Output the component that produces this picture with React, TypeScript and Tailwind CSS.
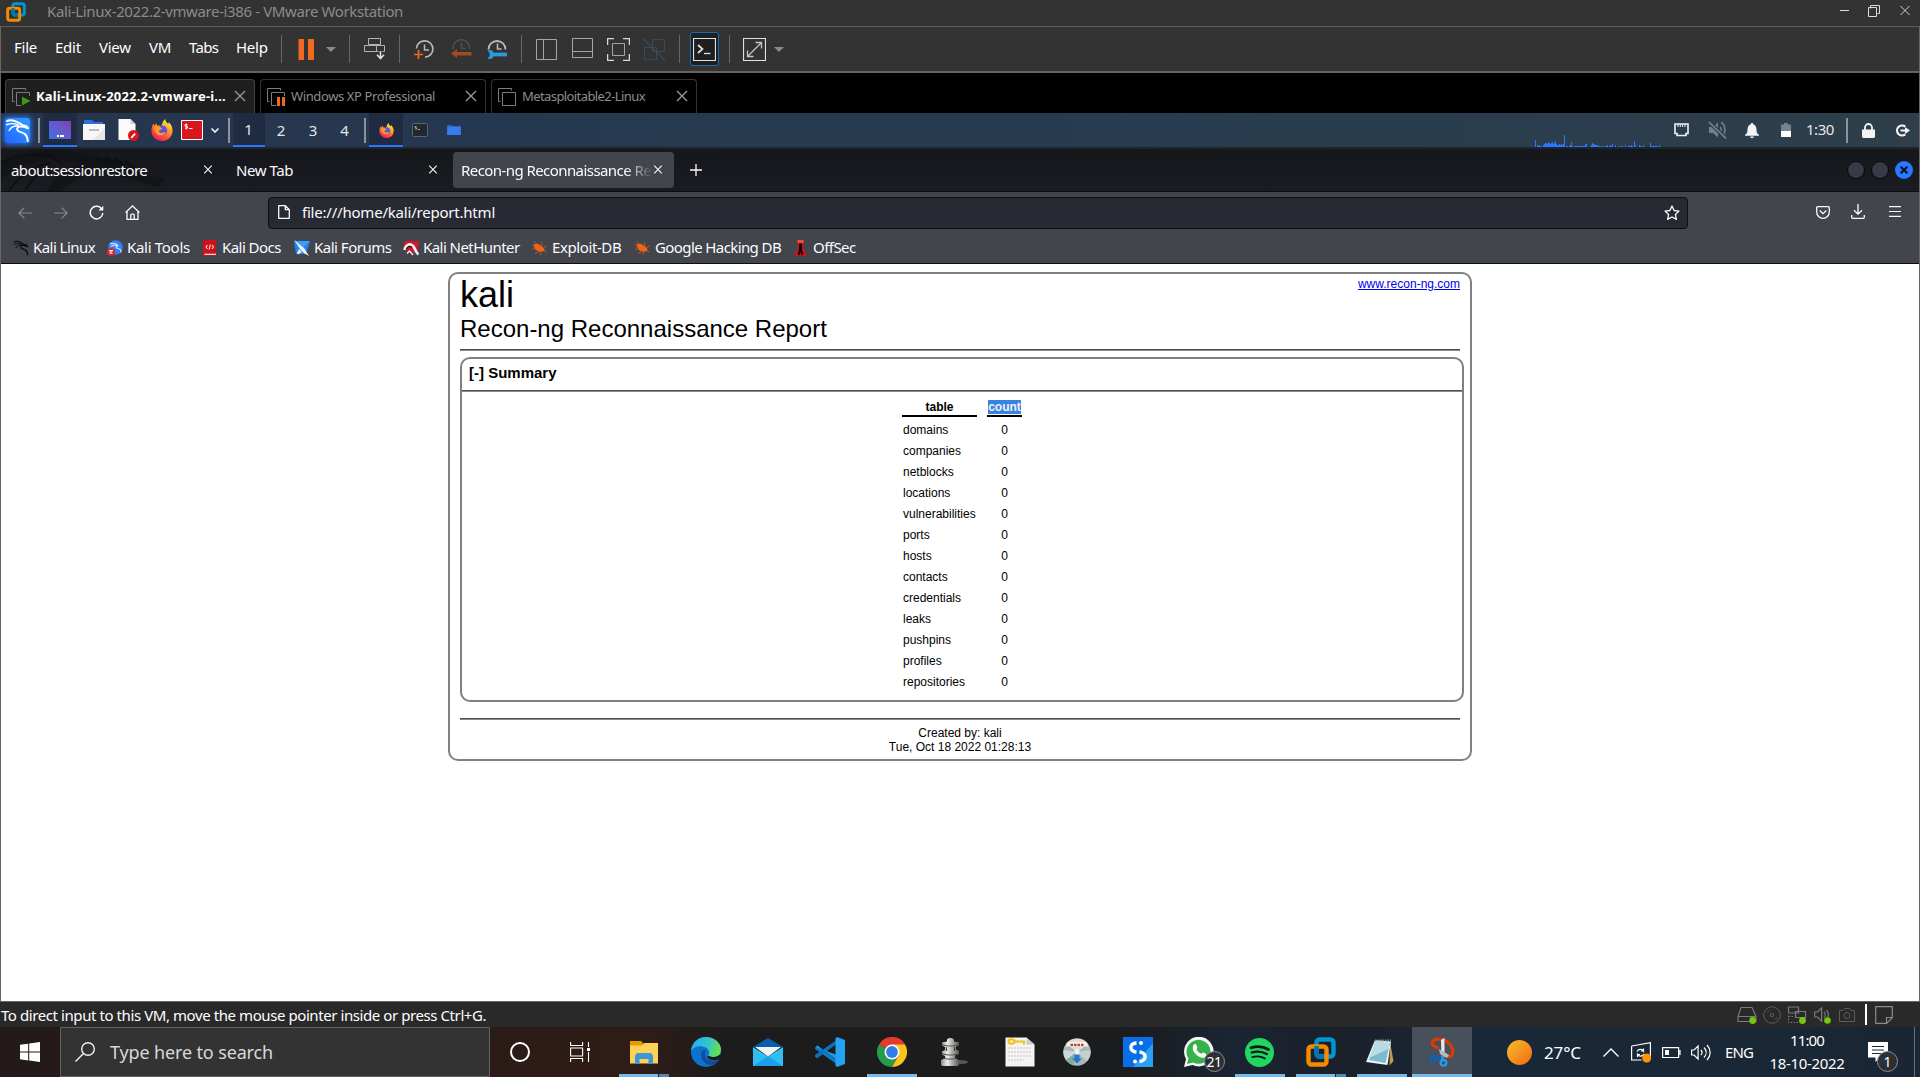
import type { ReactNode } from "react";

type IconProps = { className?: string };

/* ---------- shared drawings ---------- */

function VmwareLogo({ className = "" }: IconProps) {
  return (
    <svg className={className} viewBox="0 0 30 30" fill="none">
      <rect x="10.5" y="2.5" width="17" height="17" rx="3" stroke="#0095d3" strokeWidth="4.4" />
      <rect x="2.5" y="9.5" width="18" height="18" rx="3" stroke="#f38b00" strokeWidth="4.4" />
      <path d="M10.500 9v7.500a3 3 0 0 0 3 3H18" stroke="#0078b0" strokeWidth="4.4" />
    </svg>
  );
}

function Firefox({ className = "" }: IconProps) {
  return (
    <svg className={className} viewBox="0 0 24 24">
      <defs>
        <linearGradient id="ffx" x1="0.8" y1="0.05" x2="0.25" y2="1">
          <stop offset="0" stopColor="#fff04a" />
          <stop offset="0.35" stopColor="#ffa127" />
          <stop offset="0.7" stopColor="#ff4a3d" />
          <stop offset="1" stopColor="#e11a6c" />
        </linearGradient>
      </defs>
      <path d="M12 24C5.300 24 0.500 19 0.500 12.500 0.500 9.500 1.500 6.500 3 5l.7 2.300L5.500 4.500l1.500 2.800C9 6.800 10.500 7 11.500 8c.5-3.500 1.500-6 4-8 .3 2.800 1.500 3.800 3.300 5.300l.7-1.800c2.800 2.500 4.200 6 4 9.500C23.200 19.500 18.500 24 12 24z" fill="url(#ffx)" />
      <circle cx="12.500" cy="12.500" r="5.200" fill="#5a55d8" />
      <path d="M3.500 9c3-1.500 6.500-.8 8.500 1 .8.8-1.500 1.500-2.800 2.200-1.500 1 .3 3.300 2.800 3 1.700-.3 2.800-1.200 4-.5-1 3-7 4.500-10 1.500C4 14 3.300 11.500 3.500 9z" fill="#ff9a28" />
    </svg>
  );
}

function Dragon({ className = "", color = "#fff", width = 1.6 }: IconProps & { color?: string; width?: number }) {
  return (
    <svg className={className} viewBox="0 0 24 24" fill="none" stroke={color} strokeWidth={width} strokeLinecap="round" strokeLinejoin="round">
      <path d="M2 3c3.500-2 7-.5 9.500.8 2 .8 4 2 5.500 3.200l3.500.8 1.500 2-2.500-.8-2.700-.8c-3.500-.6-5.500.8-5 3 .6 2.300 4 2 7 4 2.200 1.600 2.800 4 3 7" />
      <path d="M1.500 6.500c4-1.500 7.500-1.500 11 0M4 12c1.500-3 4.500-4.500 9-4.500" strokeWidth={width * 0.7} />
    </svg>
  );
}

function Folder({ className = "" }: IconProps) {
  return (
    <svg className={className} viewBox="0 0 15 11">
      <path d="M0 0h5l1 1.200h9V11H0z" fill="#2b62c9" />
      <path d="M0 2h15v9H0z" fill="#367bf0" />
    </svg>
  );
}

function Close({ className = "", color = "#fbfbfe", width = 1.2 }: IconProps & { color?: string; width?: number }) {
  return (
    <svg className={className} viewBox="0 0 10 10" stroke={color} strokeWidth={width}>
      <path d="M.8.8l8.400 8.400M9.200.8L.8 9.200" />
    </svg>
  );
}

function Caret({ className = "" }: IconProps) {
  return (
    <svg className={`h-[5px] w-[10px] shrink-0 ${className}`} viewBox="0 0 10 5">
      <path d="M0 0h10L5 5z" fill="#8a8a8a" />
    </svg>
  );
}

/* ---------- VMware window ---------- */

function TitleBar() {
  return (
    <div className="flex h-[27px] items-center border-b border-[#5e5e5e] bg-[#333333] pl-[6px]">
      <VmwareLogo className="mt-[-3px] h-5 w-5" />
      <span className="ml-[21px] mt-[-4px] w-[400px] text-[15px] tracking-[-0.38px] text-[#8b8b8b]">
        Kali-Linux-2022.2-vmware-i386 - VMware Workstation
      </span>
      <svg className="ml-auto mr-[10px] mt-[-4px] h-3 w-[70px]" viewBox="0 0 70 12" fill="none" stroke="#dcdcdc">
        <path d="M0 5.500h9M30.500 3.500v-3h9v8h-2M28.500 2.500h8v9h-8z" strokeWidth="1" />
        <path d="M60.500 1l9 9M69.500 1l-9 9" strokeWidth="0.9" />
      </svg>
    </div>
  );
}

function Rule({ className = "" }: IconProps) {
  return <div className={`h-7 w-px shrink-0 bg-[#666666] ${className}`} />;
}

function Clock({ stroke }: { stroke: string }) {
  return (
    <>
      <path d="M2.500 9.500A8.200 8.200 0 1 1 11 18.200" stroke={stroke} strokeWidth="1.700" />
      <path d="M10.500 5.500v5.500h4.500" stroke={stroke} strokeWidth="1.500" />
    </>
  );
}

function MenuBar() {
  return (
    <div className="flex h-[46px] items-center border-b-2 border-[#636363] bg-[#333333] pl-[13px] text-[15px] tracking-[-0.25px] text-white">
      <span className="mt-[-4px] w-[41px]">File</span>
      <span className="mt-[-4px] w-[44px]">Edit</span>
      <span className="mt-[-4px] w-[50px]">View</span>
      <span className="mt-[-4px] w-10">VM</span>
      <span className="mt-[-4px] w-[47px] tracking-[-0.7px]">Tabs</span>
      <span className="mt-[-4px] w-[45px]">Help</span>
      <Rule />
      <svg className="ml-4 h-[21px] w-4 shrink-0" viewBox="0 0 16 21" fill="#f26722">
        <path d="M.5 0h5.500v21H.5zM10 0h6v21h-6z" />
      </svg>
      <Caret className="ml-3" />
      <Rule className="ml-[13px]" />
      <svg className="ml-[14px] h-[22px] w-[22px] shrink-0" viewBox="0 0 22 22" fill="none" stroke="#b4b4b4">
        <path d="M4.500.500h12v6h-12zM.5 7.500h12v6H.5zM12.500 7.500h8v6h-8z" />
        <path d="M16.500 12v8M12.500 16.500l4 4 4-4" stroke="#333" strokeWidth="4" />
        <path d="M16.500 13v7M13 16.800l3.500 3.700 3.500-3.700" stroke="#dddddd" strokeWidth="1.600" />
      </svg>
      <Rule className="ml-[13px]" />
      <svg className="ml-[14px] h-5 w-5 shrink-0" viewBox="0 0 20 20" fill="none">
        <Clock stroke="#b9b9b9" />
        <path d="M0 15.500h9M4.500 11v9" stroke="#f26722" strokeWidth="1.700" />
      </svg>
      <svg className="ml-[17px] mt-[-2px] h-5 w-[21px] shrink-0" viewBox="0 0 21 20" fill="none">
        <path d="M2 11a8.300 8.300 0 1 1 16.500 0" stroke="#505050" strokeWidth="1.500" />
        <path d="M10.500 4.500v6h4" stroke="#505050" strokeWidth="1.500" />
        <path d="M0 15.500l6-4.500v3h14.500v3.500H6V20z" fill="#9f4c25" />
      </svg>
      <svg className="ml-[15px] h-5 w-5 shrink-0" viewBox="0 0 20 20" fill="none">
        <path d="M1.500 10.500a8.500 8.500 0 1 1 17 0" stroke="#b9b9b9" strokeWidth="1.800" />
        <path d="M10.500 4.500v5.500h4" stroke="#b9b9b9" strokeWidth="1.600" />
        <path d="M1 11.500h3.500l2 2.500h13.500v3H6.500l-2 2.500H1l2-2.500v-3z" fill="#2f97dd" stroke="#2f97dd" strokeWidth="0.800" />
      </svg>
      <Rule className="ml-[14px]" />
      <svg className="ml-[14px] h-[21px] w-[21px] shrink-0" viewBox="0 0 21 21" fill="none" stroke="#a5a5a5">
        <path d="M.5.500h20v20H.5zM7.500.500v20" />
      </svg>
      <svg className="ml-[15px] mt-[-2px] h-5 w-[21px] shrink-0" viewBox="0 0 21 20" fill="none" stroke="#a5a5a5">
        <path d="M.5.500h20v19H.5zM.5 13.500h20" />
      </svg>
      <svg className="ml-[14px] h-[23px] w-[23px] shrink-0" viewBox="0 0 23 23" fill="none" stroke="#d8d8d8">
        <path d="M.6 7V.6H7M16 .6h6.400V7M22.400 16v6.400H16M7 22.400H.6V16" strokeWidth="1.300" />
        <path d="M5.500 5.500h12v12h-12z" stroke="#a5a5a5" />
      </svg>
      <svg className="ml-[13px] h-[23px] w-[23px] shrink-0" viewBox="0 0 23 23" fill="none" stroke="#3a4a57">
        <path d="M9.500 1.500h12v12h-12zM1.500 9.500h12v12h-12z" />
        <path d="M0 .5l22 22" strokeWidth="1.400" />
      </svg>
      <Rule className="ml-[13px]" />
      <div className="ml-[10px] flex h-[34px] w-[29px] shrink-0 items-center justify-center rounded-[3px] border border-[#1c6cb0] bg-[#1f1f1f]">
        <svg className="h-[23px] w-[23px]" viewBox="0 0 23 23" fill="none" stroke="#e0e0e0">
          <path d="M.5.500h22v22H.5z" strokeWidth="1.200" />
          <path d="M5 7l4.500 4L5 15" strokeWidth="1.700" />
          <path d="M11 15.500h6.500" strokeWidth="1.300" />
        </svg>
      </div>
      <Rule className="ml-[10px]" />
      <svg className="ml-[13px] h-[23px] w-[23px] shrink-0" viewBox="0 0 23 23" fill="none" stroke="#e0e0e0">
        <path d="M.5.500h22v22H.5z" strokeWidth="1.200" />
        <path d="M5 18L18 5M12.500 4.500h6v6M4.500 12.500v6h6" stroke="#c4c4c4" strokeWidth="1.300" />
      </svg>
      <Caret className="ml-2" />
    </div>
  );
}

function VmIcon({ badge }: { badge?: "play" | "pause" }) {
  return (
    <svg className="h-[18px] w-[18px] shrink-0" viewBox="0 0 18 18" fill="none" stroke="#7c7c7c">
      <path d="M2.500 13.500H.5V.500h13v2M4.500 4.500h13v13h-13z" />
      {badge === "play" && (
        <>
          <path d="M9 8h9v10H9z" fill="#1f1f1f" stroke="none" />
          <path d="M10 8.500l8.500 4.500L10 17.500z" fill="#3f9b0b" stroke="none" />
        </>
      )}
      {badge === "pause" && (
        <>
          <path d="M9 8h9v10H9z" fill="#000" stroke="none" />
          <path d="M10 9h3v9h-3zM15 9h3v9h-3z" fill="#f26722" stroke="none" />
        </>
      )}
    </svg>
  );
}

function VmTabs() {
  return (
    <div className="flex h-10 gap-[5px] bg-black pl-1 pt-[6px] text-[13px] text-[#8d8d8d]">
      <div className="flex w-[250px] items-center rounded-t-[4px] border border-b-0 border-[#444444] bg-[#1f1f1f] pl-[6px] pr-[8px]">
        <VmIcon badge="play" />
        <span className="ml-[6px] whitespace-nowrap font-bold tracking-[0.19px] text-white">Kali-Linux-2022.2-vmware-i...</span>
        <Close className="mb-[2px] ml-auto h-3 w-3" color="#9a9a9a" width={1.1} />
      </div>
      <div className="flex w-[226px] items-center rounded-t-[4px] border border-b-0 border-[#343434] bg-black pl-[6px] pr-[8px]">
        <VmIcon badge="pause" />
        <span className="ml-[6px] whitespace-nowrap tracking-[-0.38px]">Windows XP Professional</span>
        <Close className="mb-[2px] ml-auto h-3 w-3" color="#9a9a9a" width={1.1} />
      </div>
      <div className="flex w-[206px] items-center rounded-t-[4px] border border-b-0 border-[#343434] bg-black pl-[6px] pr-[8px]">
        <VmIcon />
        <span className="ml-[6px] whitespace-nowrap tracking-[-0.59px]">Metasploitable2-Linux</span>
        <Close className="mb-[2px] ml-auto h-3 w-3" color="#9a9a9a" width={1.1} />
      </div>
    </div>
  );
}

/* ---------- Kali panel ---------- */

function Tile({ children, className = "w-[34px]", active = false }: { children?: ReactNode; className?: string; active?: boolean }) {
  return (
    <div
      className={`flex h-[34px] shrink-0 items-center justify-center ${className} ${
        active ? "border-b-2 border-[#2777ff] bg-[#1f2b40] pt-[2px]" : ""
      }`}
    >
      {children}
    </div>
  );
}

function PanelSep({ className = "" }: IconProps) {
  return <div className={`h-[25px] w-[2px] shrink-0 bg-[#8c939d] ${className}`} />;
}

const LOAD = [
  7, 0, 2, 1, 2, 1, 1, 0, 2, 3, 4, 4, 3, 5, 4, 3, 4, 5, 3, 4, 6, 3, 2, 2, 3, 2, 3, 2, 3, 12, 0, 1, 1, 0, 1, 2, 5, 1, 0, 1, 1,
  1, 1, 1, 1, 1, 1, 1, 1, 1, 3, 3, 0, 0, 0, 1, 2, 4, 3, 3, 2, 2, 2, 1, 1, 1, 0, 1, 1, 0, 1, 1, 2, 0, 1, 2, 1, 3, 0, 0, 2, 0,
  0, 1, 0, 1, 1, 1, 0, 0, 2, 0, 0, 1, 1, 1, 2, 1, 0, 6, 2, 0, 0, 0, 2, 1, 1, 0, 2, 0, 0, 0, 0, 0, 0, 4, 1, 1, 1, 1, 1, 1, 1, 0, 2, 0,
];

function KaliPanel() {
  return (
    <div className="flex h-[36px] items-center border-b-2 border-[#20242c] bg-gradient-to-r from-[#26354e] via-[#263b50] to-[#2e3f4b] text-[15px] text-[#e4e6ea]">
      <div className="ml-1 flex h-[25px] w-[25px] shrink-0 items-center justify-center rounded-[3px] bg-gradient-to-tr from-[#2565ff] to-[#2f9dff] shadow-[0_0_5px_1px_#2777ff]">
        <Dragon className="h-[25px] w-[25px]" width={1.9} />
      </div>
      <PanelSep className="ml-2" />
      <Tile active className="ml-[3px] w-[34px]">
        <div className="flex h-[18px] w-[22px] items-end justify-center bg-gradient-to-tr from-[#3273e6] to-[#7b3fb4] pb-[2px]">
          <div className="h-[2px] w-[7px] bg-[repeating-linear-gradient(90deg,#fff_0_2px,transparent_2px_2.5px)]" />
        </div>
      </Tile>
      <Tile>
        <svg className="h-5 w-[22px]" viewBox="0 0 22 20">
          <path d="M1 0h8l2 2h9v5H1z" fill="#2f6ee0" />
          <path d="M0 4h22v16H0z" fill="#f7f7f7" />
          <path d="M22 8L10 20h12z" fill="#e6e6e6" />
          <path d="M6 9h10v2H6z" fill="#b9bcc4" />
        </svg>
      </Tile>
      <Tile>
        <svg className="h-[22px] w-[21px]" viewBox="0 0 21 22">
          <path d="M.5 0h12l5 5v16H.5z" fill="#fafafa" />
          <path d="M12.500 0l5 5h-5z" fill="#cfcfcf" />
          <circle cx="15.500" cy="16.500" r="5.500" fill="#d8161b" />
          <path d="M13.200 18.800l4-4.200" stroke="#fff" strokeWidth="1.800" />
        </svg>
      </Tile>
      <Tile>
        <Firefox className="h-[22px] w-[22px]" />
      </Tile>
      <Tile className="w-[26px]">
        <svg className="h-5 w-[22px]" viewBox="0 0 22 20" fill="none">
          <path d="M.5.500h21v19H.5z" fill="#d8161b" stroke="#fff" />
          <path d="M6.500 4.500H4v1.800h2.500v1.900H4M5.200 3.500v6" stroke="#fff" strokeWidth="0.900" />
          <path d="M8 8.500h3.500" stroke="#fff" />
        </svg>
      </Tile>
      <Tile className="w-5">
        <svg className="h-[5px] w-2" viewBox="0 0 8 5" fill="none" stroke="#fff" strokeWidth="1.500">
          <path d="M.5.500L4 4 7.500.500" />
        </svg>
      </Tile>
      <PanelSep className="ml-[3px]" />
      <Tile active className="ml-[3px] w-8 pr-px">
        <span className="mt-[-2px]">1</span>
      </Tile>
      <Tile className="w-8">2</Tile>
      <Tile className="w-8">3</Tile>
      <Tile className="w-8 pr-px">4</Tile>
      <PanelSep className="ml-[3px]" />
      <Tile active className="ml-[3px] w-[34px]">
        <Firefox className="h-[15px] w-[15px]" />
      </Tile>
      <Tile>
        <svg className="h-[14px] w-4" viewBox="0 0 16 14" fill="none">
          <rect x="0.500" y="0.500" width="15" height="13" rx="1" fill="#23272f" stroke="#596474" />
          <path d="M4.500 3.500H3v1.200h1.500V6H3M5.500 6.500h2.500" stroke="#b8bec8" strokeWidth="0.800" />
        </svg>
      </Tile>
      <Tile>
        <Folder className="h-[10px] w-[14px]" />
      </Tile>
      <div className="ml-auto flex h-[34px] items-end">
        {LOAD.map((v, i) => (
          <div key={i} className="w-px bg-[#2777ff]" style={{ height: v }} />
        ))}
      </div>
      <Tile className="ml-[3px] w-[34px]">
        <svg className="h-[14px] w-[15px]" viewBox="0 0 15 14" fill="none" stroke="#f2f2f2">
          <path d="M1 1h13v9.500h-2V12.500H3v-2H1z" strokeWidth="1.600" />
          <path d="M4 1v3M6.300 1v3M8.600 1v3M11 1v3" strokeWidth="1" />
        </svg>
      </Tile>
      <Tile className="ml-[2px] w-[35px]">
        <svg className="h-[18px] w-[19px]" viewBox="0 0 19 18" fill="none" stroke="#72818c">
          <path d="M1 6h4l5-4.500v15L5 12H1z" fill="#72818c" stroke="none" />
          <path d="M12 6c1.500 1.500 1.500 4.500 0 6M13 1.500c5 2 5 11 1 14" strokeWidth="1.600" />
          <path d="M.8.800l17.200 16.500" stroke="#2c3e4d" strokeWidth="4" />
          <path d="M.8.800l17.200 16.500" strokeWidth="1.600" />
        </svg>
      </Tile>
      <Tile>
        <svg className="h-[15px] w-[14px]" viewBox="0 0 14 15" fill="#f4f4f4">
          <path d="M7 0c.8 0 1.200.5 1.200 1.200C10.500 2 11.500 4 11.500 7c0 2.500.8 3.800 2.500 5v.8H0V12c1.700-1.200 2.500-2.500 2.500-5 0-3 1-5 3.300-5.800C5.800.500 6.200 0 7 0zM5 13.500h4c-.5 1-1 1.500-2 1.500s-1.500-.5-2-1.500z" />
        </svg>
      </Tile>
      <Tile>
        <svg className="h-[14px] w-[10px]" viewBox="0 0 10 14">
          <path d="M3 0h4v1.500h3V8H0V1.500h3z" fill="#76838c" />
          <path d="M0 8h10v6H0z" fill="#fff" />
        </svg>
      </Tile>
      <Tile className="w-[34px] tracking-[-0.44px]">
        <span className="mt-[-2px]">1:30</span>
      </Tile>
      <PanelSep className="ml-[9px]" />
      <Tile className="ml-[3px] w-[34px]">
        <svg className="h-[15px] w-[13px]" viewBox="0 0 13 15">
          <path d="M3 7V4.500a3.500 3.500 0 0 1 7 0V7" fill="none" stroke="#f4f4f4" strokeWidth="1.800" />
          <path d="M0 6.500h13V14l-1 1H1l-1-1z" fill="#f4f4f4" />
        </svg>
      </Tile>
      <Tile className="w-[34px]">
        <svg className="h-[13px] w-[15px]" viewBox="0 0 15 13" fill="none" stroke="#f4f4f4">
          <path d="M10.300 2.700a5 5 0 1 0 0 7.600" strokeWidth="2.200" />
          <path d="M5.500 6.500H11" strokeWidth="2" />
          <path d="M10 3l5 3.500-5 3.500z" fill="#f4f4f4" stroke="none" />
        </svg>
      </Tile>
    </div>
  );
}

/* ---------- Firefox chrome ---------- */

function BrowserTabs() {
  return (
    <div className="relative flex h-[43px] items-center border-b border-[#0c0d10] bg-gradient-to-b from-[#16171b] to-[#1b1c22] text-[15px] text-[#fbfbfe]">
      <svg className="absolute left-0 top-0 h-[42px] w-[170px]" viewBox="0 0 170 42" fill="none">
        <path d="M0 12C20 2 45 0 70 2c25 4 55 12 72 24l22 3-6 9-20-6-35-8C88 24 72 30 60 42H46C55 24 68 18 80 16 60 8 30 8 0 30z" fill="#131418" />
        <path d="M94 9l12 5M104 8l12 7M114 9l10 8M124 12l10 8" stroke="#0f1013" strokeWidth="3" />
        <path d="M8 42C20 24 34 16 50 14M24 42c6-12 14-18 24-24M0 14c18-9 34-10 50-6M44 2L62 16" stroke="#0f1013" strokeWidth="2" />
      </svg>
      <span className="relative ml-[10px] w-[192px] whitespace-nowrap tracking-[-0.6px]">about:sessionrestore</span>
      <Close className="relative mt-[-1px] h-[9px] w-[10px]" />
      <span className="ml-[23px] w-[192px] tracking-[-0.43px]">New Tab</span>
      <Close className="mt-[-1px] h-[9px] w-[10px]" />
      <div className="ml-[15px] flex h-9 w-[221px] items-center rounded-[4px] bg-[#43454d] pl-2">
        <span className="w-[192px] overflow-hidden whitespace-nowrap leading-6 tracking-[-0.57px] [mask-image:linear-gradient(to_right,black_164px,transparent_192px)]">
          Recon-ng Reconnaissance Report
        </span>
        <Close className="mt-[-1px] h-[9px] w-[10px] shrink-0" />
      </div>
      <svg className="ml-4 h-3 w-3" viewBox="0 0 12 12" stroke="#fbfbfe" strokeWidth="1.300">
        <path d="M6 0v12M0 6h12" />
      </svg>
      <div className="ml-auto flex gap-[6px] pr-[6px]">
        <div className="h-[18px] w-[18px] rounded-full border border-[#060708] bg-[#363a46]" />
        <div className="h-[18px] w-[18px] rounded-full border border-[#060708] bg-[#363a46]" />
        <div className="flex h-[18px] w-[18px] items-center justify-center rounded-full bg-[#2777ff]">
          <Close className="h-2 w-2" color="#10131a" width={2.6} />
        </div>
      </div>
    </div>
  );
}

function NavBar() {
  return (
    <div className="flex h-[41px] items-center bg-[#43454d] text-[15px] text-[#fbfbfe]">
      <svg className="ml-[17px] h-3 w-[14px]" viewBox="0 0 14 12" fill="none" stroke="#85878d" strokeWidth="1.200">
        <path d="M14 6H.8M6.300.700L.8 6l5.500 5.300" />
      </svg>
      <svg className="ml-[22px] h-3 w-[14px]" viewBox="0 0 14 12" fill="none" stroke="#85878d" strokeWidth="1.200">
        <path d="M0 6h13.200M7.700.700L13.200 6l-5.500 5.300" />
      </svg>
      <svg className="ml-[21px] h-[15px] w-[15px]" viewBox="0 0 15 15" fill="none" stroke="#fbfbfe" strokeWidth="1.500">
        <path d="M13 4.500A6.300 6.300 0 1 0 13.800 8" />
        <path d="M14.300.800v4.700H9.500z" fill="#fbfbfe" stroke="none" />
      </svg>
      <svg className="ml-[21px] h-[15px] w-[15px]" viewBox="0 0 15 15" fill="none" stroke="#fbfbfe" strokeWidth="1.300">
        <path d="M.6 7.500L7.500.900l6.900 6.600M2 6.500v7.800h11V6.500M5.800 14V9.800c0-1 3.400-1 3.400 0V14" />
      </svg>
      <div className="ml-[128px] flex h-8 w-[1420px] items-center rounded-[4px] border border-[#0c0d10] bg-[#272a33] pl-[9px] pr-[7px]">
        <svg className="mt-[-1px] h-[14px] w-3" viewBox="0 0 12 14" fill="none" stroke="#fbfbfe" strokeWidth="1.300">
          <path d="M1.700.700h5.600l4 4v8.600H.700V.700zM7.300.700v4h4" strokeLinejoin="round" />
        </svg>
        <span className="ml-3 tracking-[-0.21px]">file:///home/kali/report.html</span>
        <svg className="ml-auto h-4 w-4" viewBox="0 0 16 16" fill="none" stroke="#fbfbfe" strokeWidth="1.300" strokeLinejoin="round">
          <path d="M8 1l2.100 4.500 4.900.600-3.600 3.400 1 4.900L8 12l-4.400 2.400 1-4.900L1 6.100l4.900-.6z" />
        </svg>
      </div>
      <svg className="ml-32 mt-[-1px] h-[13px] w-[14px]" viewBox="0 0 14 13" fill="none" stroke="#fbfbfe" strokeWidth="1.300">
        <path d="M1.700.700h10.600a1 1 0 0 1 1 1V6A6.300 6.300 0 0 1 .7 6V1.700a1 1 0 0 1 1-1zM3.700 4.500L7 7.700l3.300-3.200" />
      </svg>
      <svg className="ml-[21px] mt-[-2px] h-[15px] w-[14px]" viewBox="0 0 14 15" fill="none" stroke="#fbfbfe" strokeWidth="1.300">
        <path d="M7 0v10M3 6.300l4 3.900 4-3.900M.7 11v2.300c0 .6.400 1 1 1h10.600c.6 0 1-.4 1-1V11" />
      </svg>
      <svg className="ml-[24px] mt-[-2px] h-[11px] w-3" viewBox="0 0 12 11" stroke="#fbfbfe" strokeWidth="1.200">
        <path d="M0 .6h12M0 5.500h12M0 10.400h12" />
      </svg>
    </div>
  );
}

function Bug() {
  return (
    <svg className="h-[14px] w-[15px] shrink-0" viewBox="0 0 15 14" fill="none">
      <path d="M0 3l4 2M2 0l3 4M0 8h5M3 12l4-1M8 14l1-3M9 1l1.500 4M15 4.500l-3 2M15 11l-3-1" stroke="#c35a24" strokeWidth="0.800" />
      <path d="M2 3.500c2-1.300 4.500-.8 6.500.8s3.500 2.400 4 4-1 2.500-2.700 2.500-5-.5-6.500-2.800S.8 4.500 2 3.500z" fill="#ee6414" />
    </svg>
  );
}

function Bookmark({ icon, label, className }: { icon: ReactNode; label: string; className: string }) {
  return (
    <div className={`flex items-center whitespace-nowrap ${className}`}>
      <div className="mt-px flex w-5 shrink-0 items-center">{icon}</div>
      {label}
    </div>
  );
}

function Bookmarks() {
  return (
    <div className="flex h-[31px] items-center border-b border-[#0c0d10] bg-[#43454d] pb-[2px] pl-3 text-[15px] tracking-[-0.55px] text-[#fbfbfe]">
      <Bookmark className="w-[94px]" label="Kali Linux" icon={<Dragon className="h-4 w-4" color="#0c0c0e" width={2} />} />
      <Bookmark
        className="w-[95px] tracking-[-0.3px]"
        label="Kali Tools"
        icon={
          <svg className="h-4 w-4" viewBox="0 0 16 16" fill="none">
            <circle cx="8.500" cy="7.500" r="7.300" fill="#2f80f5" />
            <path d="M3 4c4-1.500 7 0 8 2-2 .5-3 1.500 0 2.500s3 2 3 4M4 6.500c2-1.500 4-1.500 6-1" stroke="#d5e6ff" strokeWidth="1.200" />
            <circle cx="4" cy="12" r="4" fill="#dc2626" />
            <path d="M2 10.500h4M3.200 10.500v3.500M4.800 10.500v3.500" stroke="#fff" strokeWidth="0.900" />
          </svg>
        }
      />
      <Bookmark
        className="w-[92px] tracking-[-0.55px]"
        label="Kali Docs"
        icon={
          <svg className="ml-px h-4 w-[13px]" viewBox="0 0 13 16" fill="none">
            <path d="M1 0h12v13.500H1.500V15H13v1H1.500C.500 16 0 15.500 0 14.500V1z" fill="#d3101a" />
            <path d="M1.500 13.700H13v1.200H1.500z" fill="#f0eaea" />
            <path d="M4.500 5L3 7l1.500 2M9 5l1.500 2L9 9M7.300 4.500L6.200 9.500" stroke="#fff" />
          </svg>
        }
      />
      <Bookmark
        className="w-[109px] tracking-[-0.5px]"
        label="Kali Forums"
        icon={
          <svg className="h-4 w-4" viewBox="0 0 16 16">
            <path d="M0 1h16l-4 13H2z" fill="#2583f3" />
            <path d="M0 1h16L7 9z" fill="#38a0ff" />
            <path d="M.5 0l5.500 5 4 3 4 6.500 1.500 1.500-5-2.500L6 9z" fill="#f5f7fa" />
            <path d="M5 9l3 3-4 2.500L3 13z" fill="#e7edf5" />
          </svg>
        }
      />
      <Bookmark
        className="w-[129px]"
        label="Kali NetHunter"
        icon={
          <svg className="h-4 w-4" viewBox="0 0 16 16" fill="none">
            <path d="M1 1h15l-1.500 9L9 14 1 9z" fill="#d3162a" />
            <path d="M1.500 10c1-5 5-7.500 8.500-4 3 3 2 6 5.500 8.500" stroke="#f4f4f4" strokeWidth="2.600" />
            <path d="M3 9.500c1.500-3.500 4-4 6-2" stroke="#191919" strokeWidth="1.100" />
            <path d="M4 13.500L6.500 11l3.500 4" stroke="#efefef" strokeWidth="1.400" />
          </svg>
        }
      />
      <Bookmark className="w-[103px] tracking-[-0.4px]" label="Exploit-DB" icon={<Bug />} />
      <Bookmark className="w-[158px] tracking-[-0.6px]" label="Google Hacking DB" icon={<Bug />} />
      <Bookmark
        className="w-[80px]"
        label="OffSec"
        icon={
          <svg className="ml-[1px] h-4 w-[13px]" viewBox="0 0 13 16">
            <path d="M3.500 0h6v9l3.500 7H0l3.500-7z" fill="#c9151b" />
            <path d="M3.500 0h6v3h-6z" fill="#ef4a4a" />
            <path d="M5 4l1.500-1L8 4v6l1.500 4-2 1.500L6.500 12l-1 3.500-2-1.500L5 10z" fill="#170304" />
          </svg>
        }
      />
    </div>
  );
}

/* ---------- report page ---------- */

const TABLES = [
  "domains",
  "companies",
  "netblocks",
  "locations",
  "vulnerabilities",
  "ports",
  "hosts",
  "contacts",
  "credentials",
  "leaks",
  "pushpins",
  "profiles",
  "repositories",
];

function Divider() {
  return <div className="h-[2px] border-t border-[#4e4e4e] bg-[#8a8a8a]" />;
}

function Report() {
  return (
    <div className="h-[737px] bg-white pt-2 font-['Liberation_Sans',sans-serif] text-xs leading-[14px] text-black">
      <div className="mx-auto h-[489px] w-[1024px] rounded-[10px] border-2 border-[#808080] px-[10px]">
        <div className="flex justify-between">
          <div>
            <div className="h-[41px] text-[36px] leading-[41px]">kali</div>
            <div className="h-[28px] text-[24px] leading-[28px]">Recon-ng Reconnaissance Report</div>
          </div>
          <a className="mt-[3px] h-[14px] text-[#0000ee] underline">www.recon-ng.com</a>
        </div>
        <div className="mt-[6px]">
          <Divider />
        </div>
        <div className="mt-[6px] h-[345px] w-[1004px] rounded-[10px] border-2 border-[#808080]">
          <div className="h-[31px] pl-[7px] pt-[5px] text-[15px] font-bold leading-[17px]">[-] Summary</div>
          <Divider />
          <div className="mt-[8px] grid grid-cols-[75px_35px] justify-center gap-x-[10px]">
            <div className="border-b-2 border-black pb-px text-center font-bold">table</div>
            <div className="border-b-2 border-black px-px pb-px text-center font-bold">
              <span className="block bg-[#3584e4] text-[#f2f2f2]">count</span>
            </div>
          </div>
          <div className="mt-[2px]">
            {TABLES.map((name) => (
              <div key={name} className="grid h-[21px] grid-cols-[75px_35px] items-center justify-center gap-x-[10px]">
                <span className="pl-px">{name}</span>
                <span className="text-center">0</span>
              </div>
            ))}
          </div>
        </div>
        <div className="mt-4">
          <Divider />
        </div>
        <div className="mt-[6px] text-center">
          <div>Created by: kali</div>
          <div>Tue, Oct 18 2022 01:28:13</div>
        </div>
      </div>
    </div>
  );
}

/* ---------- VMware status bar ---------- */

function StatusBar() {
  return (
    <div className="flex h-[26px] items-center border-t border-[#666666] bg-[#292929] pl-px text-[15px] tracking-[-0.42px] text-white">
      <span className="mt-[2px] whitespace-nowrap">To direct input to this VM, move the mouse pointer inside or press Ctrl+G.</span>
      <div className="ml-auto flex items-center">
        <svg className="h-[18px] w-5" viewBox="0 0 20 18" fill="none" stroke="#7a7a7a">
          <path d="M4 1.500h11l4 9v5H1v-5zM1 10.500h18" strokeWidth="1.200" />
          <circle cx="15.700" cy="14.500" r="3.400" fill="#76c70f" stroke="none" />
        </svg>
        <svg className="ml-[6px] h-[18px] w-[18px]" viewBox="0 0 18 18" fill="none" stroke="#5c5c5c">
          <circle cx="9" cy="9" r="8.300" />
          <circle cx="9" cy="9" r="1.700" />
          <path d="M4 6.500L6 4.500M12 13.500l2-2" />
        </svg>
        <svg className="ml-[6px] h-[18px] w-5" viewBox="0 0 20 18" fill="none" stroke="#7a7a7a">
          <path d="M1.500 1h10v6h-10zM8.500 5.500h10v6h-10z" strokeWidth="1.200" />
          <path d="M1.500 9.500v7h13M1.500 10.500h6" strokeDasharray="1.500 1.500" />
          <circle cx="15.500" cy="14.500" r="3.400" fill="#76c70f" stroke="none" />
        </svg>
        <svg className="ml-[7px] h-[18px] w-[17px]" viewBox="0 0 17 18" fill="none" stroke="#7a7a7a">
          <path d="M.6 6h3l4-4v13l-4-4h-3zM10 6c1.500 1.500 1.500 4 0 5.500M12.500 4c2.500 3 2.500 6 0 9" strokeWidth="1.200" />
          <circle cx="13.500" cy="14.500" r="3.300" fill="#76c70f" stroke="none" />
        </svg>
        <svg className="ml-2 h-[14px] w-4" viewBox="0 0 16 14" fill="none" stroke="#5c5c5c">
          <path d="M.5 2.500H4L5.500.600h5L12 2.500h3.500v11H.5z" />
          <circle cx="8" cy="7.500" r="3" />
        </svg>
        <div className="ml-[10px] h-[21px] w-[2px] bg-white" />
        <svg className="ml-2 mr-[27px] h-[18px] w-[18px]" viewBox="0 0 18 18" fill="none" stroke="#8a8a8a">
          <path d="M.7.700h16.600v11l-5.600 5.600H.7zM11.500 17v-5.500h5.500" strokeWidth="1.200" />
        </svg>
      </div>
    </div>
  );
}

/* ---------- Windows taskbar ---------- */

function TaskbarApp({ children, running = "", className = "w-[62px]" }: { children: ReactNode; running?: "" | "one" | "many"; className?: string }) {
  return (
    <div className={`flex h-[50px] shrink-0 flex-col items-center ${className}`}>
      <div className="flex h-[47px] items-center pt-[3px]">{children}</div>
      {running === "one" && <div className="h-[3px] w-[50px] bg-[#76b9ed]" />}
      {running === "many" && (
        <div className="flex h-[3px] w-[50px]">
          <div className="w-[39px] bg-[#76b9ed]" />
          <div className="ml-px grow bg-[#5587ae]" />
        </div>
      )}
    </div>
  );
}

function Taskbar() {
  return (
    <div className="flex h-[50px] bg-[linear-gradient(90deg,#241a19_0px,#2b1b17_490px,#301c17_640px,#1d1c1c_720px,#1b1c1d_1120px,#1a2433_1230px,#1b202a_1340px,#192838_1480px,#1a2634_1920px)] text-white">
      <div className="flex w-[60px] items-center justify-center">
        <svg className="h-5 w-5" viewBox="0 0 20 20" fill="#fff">
          <path d="M0 2.800l8.200-1.100v7.800H0zM9.200 1.500L20 0v9.500H9.200zM0 10.500h8.200v7.900L0 17.300zM9.200 10.500H20V20L9.200 18.600z" />
        </svg>
      </div>
      <div className="flex w-[430px] items-center border border-[#606060] bg-[#333333] pl-[14px]">
        <svg className="h-5 w-5" viewBox="0 0 20 20" fill="none" stroke="#f0f0f0" strokeWidth="1.400">
          <circle cx="13" cy="7" r="6.300" />
          <path d="M8.500 11.500L.5 19.500" />
        </svg>
        <span className="ml-[15px] text-[18px] tracking-[-0.14px] text-[#d8d8d8]">Type here to search</span>
      </div>
      <div className="flex w-[60px] items-center justify-center">
        <div className="h-5 w-5 rounded-full border-[2.500px] border-white" />
      </div>
      <div className="flex w-[62px] items-center justify-center pr-[2px]">
        <svg className="h-5 w-5" viewBox="0 0 20 20" fill="none" stroke="#fff" strokeWidth="1.100">
          <path d="M.6 0v3.500h12V0M.6 6h12v8H.6zM.6 20v-3.500h12V20M18.500 0v5M18.500 10v10" />
          <path d="M17 6h3v3h-3z" fill="#fff" stroke="none" />
        </svg>
      </div>
      <TaskbarApp className="w-[63px]" running="many">
        <svg className="h-[23px] w-7" viewBox="0 0 28 23">
          <path d="M0 0h11l2 2v3H0z" fill="#e09c00" />
          <path d="M0 4.500h12L14 2h14v20.500H0z" fill="#ffd255" />
          <path d="M5 23v-8.500l2-2.500h14l2 2.500V23h-4.500v-5h-9v5z" fill="#3c96dc" />
        </svg>
      </TaskbarApp>
      <TaskbarApp>
        <svg className="h-[30px] w-[30px]" viewBox="0 0 30 30">
          <defs>
            <linearGradient id="edg" x1="0" y1="0.200" x2="1" y2="0.500">
              <stop offset="0" stopColor="#2ea9ea" />
              <stop offset="0.500" stopColor="#2fc2d4" />
              <stop offset="1" stopColor="#66e04c" />
            </linearGradient>
          </defs>
          <circle cx="15" cy="15" r="15" fill="#0b72cf" />
          <path d="M0 14C1 5 7.500 0 15 0c8.500 0 15 6 15 12.500 0 5-3.500 8-8 8-3.500 0-5.500-1.200-4.500-2.500 1.500-2 .5-5.500-2-7C10 8 3 9 0 14z" fill="url(#edg)" />
          <path d="M11 14c-3 6 2 14 9 14 3.500-.5 6.500-3 8.500-6-1 .3-4 2.500-9 1.500-6-1.300-6.500-6-4.500-10-1.500-1-3-.8-4 .5z" fill="#134c9b" />
          <path d="M30 16.500c-.3 2.500-.8 4-1.800 5.800-1.500.5-4.500 1.500-8 .5-3.700-1-4.700-3.500-3.200-4.300 5 2.700 10 1.500 13-2z" fill="#1c1c1c" />
        </svg>
      </TaskbarApp>
      <TaskbarApp>
        <svg className="h-7 w-[30px]" viewBox="0 0 30 28">
          <path d="M0 9L15 0l15 9z" fill="#0a5cad" />
          <path d="M0 9l15 9.500L30 9v19H0z" fill="#2fc0f3" />
          <path d="M2 9h26L15 18.500z" fill="#f2f2f2" />
          <path d="M0 28l15-10 15 10z" fill="#1ba1e8" />
        </svg>
      </TaskbarApp>
      <TaskbarApp>
        <svg className="h-[30px] w-[30px]" viewBox="0 0 30 30">
          <path d="M0 10.500l2-2L23 24v4L0 12z" fill="#0a7dc9" />
          <path d="M0 19.500l2 2L23 6V2L0 18z" fill="#0f6fb5" />
          <path d="M1 10l1.500-1.500L22 23v-5z" fill="#2397e0" />
          <path d="M22 0l8 3v24l-8 3-1.500-1.500V1.500z" fill="#25a3f3" />
        </svg>
      </TaskbarApp>
      <TaskbarApp running="one">
        <svg className="h-[30px] w-[30px]" viewBox="0 0 30 30">
          <path d="M15 15L2 7.500A15 15 0 0 1 28 7.500z" fill="#e33b2e" />
          <path d="M15 0A15 15 0 0 1 28 7.500H15z" fill="#e33b2e" />
          <path d="M15 15L2 7.500A15 15 0 0 0 15 30l6.500-11.200z" fill="#259b4c" />
          <path d="M15 7.500h13A15 15 0 0 1 15 30l6.500-11.200z" fill="#fcc31c" />
          <circle cx="15" cy="15" r="7.500" fill="#fff" />
          <circle cx="15" cy="15" r="5.900" fill="#2f7de9" />
        </svg>
      </TaskbarApp>
      <TaskbarApp className="w-[61px]">
        <svg className="h-7 w-7" viewBox="0 0 28 28">
          <defs>
            <linearGradient id="stone" x1="0" x2="1" y1="0" y2="0">
              <stop offset="0" stopColor="#8d8f8c" />
              <stop offset="0.350" stopColor="#eceeea" />
              <stop offset="0.700" stopColor="#9a9c98" />
              <stop offset="1" stopColor="#5b5d5a" />
            </linearGradient>
          </defs>
          <ellipse cx="20" cy="24" rx="8" ry="2" fill="#55585a" />
          <path d="M7 1.500C9-.5 12-.5 14 1.500v2l5 1v3l-3 1v3l3 1.500v3l-4 1.500v3l4 1.500v5c-4 3-14 3-18 0v-5l4-1.500V18l-3-1.500v-3L5 12V9L2 7.500v-3l5-1z" fill="url(#stone)" />
          <path d="M2 6.500c5 2 12 2 17 0M2 15.500c5 2 12 2 17 0M3 20c4 1.500 10 1.500 14 0" fill="none" stroke="#4d504d" strokeWidth="1" />
          <path d="M6.500 9v4M14.500 9v4" stroke="#3e403e" strokeWidth="1.200" />
        </svg>
      </TaskbarApp>
      <TaskbarApp className="w-[63px] pl-2">
        <svg className="h-[30px] w-[30px]" viewBox="0 0 30 30" fill="none">
          <path d="M.5.500h21l8 7V29.500H.5z" fill="#f4f4f2" />
          <path d="M21.500.500l8 7h-8z" fill="#c9c9c7" />
          <path d="M3 11h24M3 15h24M3 19h24M3 23h16" stroke="#c6c6c6" strokeDasharray="2 1" />
          <ellipse cx="6.500" cy="4.500" rx="3" ry="2.200" stroke="#f0c21a" strokeWidth="2.200" />
          <path d="M9 4.500h10v3" stroke="#f0c21a" strokeWidth="2.200" />
        </svg>
      </TaskbarApp>
      <TaskbarApp className="w-[60px]">
        <svg className="h-7 w-7" viewBox="0 0 28 28">
          <circle cx="14" cy="14" r="13.700" fill="#a9b8b6" />
          <path d="M14 14L3 6A14 14 0 0 1 25 6z" fill="#e3ddd0" />
          <path d="M14 14L.5 12A14 14 0 0 0 3 22z" fill="#cfd7da" />
          <path d="M14 14L3 22A14 14 0 0 0 10 27.500z" fill="#7fb093" />
          <path d="M14 14L27.500 12A14 14 0 0 1 24 23z" fill="#c2d3cf" />
          <path d="M5 4h18l2.500 5C18 6.500 10 6.500 2.500 9z" fill="#f6f1ea" />
          <path d="M7.500 6.800h13" stroke="#b3473e" strokeWidth="2.200" strokeDasharray="2.500 1" />
          <circle cx="14" cy="13.500" r="2.600" fill="#eef3f5" />
          <path d="M11.500 17h5v3.500h2.500L14 25.500 9 20.500h2.500z" fill="#2478cf" />
        </svg>
      </TaskbarApp>
      <TaskbarApp className="w-[61px]">
        <svg className="h-[30px] w-[30px]" viewBox="0 0 30 30" fill="none">
          <path d="M0 0h30v30H0z" fill="#0a6fe6" />
          <path d="M30 6v24H10z" fill="#2aa0f2" />
          <path d="M13.500 6c-7.500 0-7.500 8.500 0 9M16.500 15c7.500.5 7.500 9 0 9.500" stroke="#fff" strokeWidth="3.400" />
          <circle cx="18" cy="6" r="2" fill="#fff" />
          <circle cx="12" cy="24.500" r="2" fill="#fff" />
        </svg>
      </TaskbarApp>
      <TaskbarApp className="w-[61px]">
        <div className="relative">
          <svg className="h-[30px] w-[30px]" viewBox="0 0 30 30">
            <path d="M0 30l2-8A14.800 14.800 0 1 1 8.500 28z" fill="#f5f5f5" />
            <path d="M3 27l1.500-5.500A12 12 0 1 1 9 25.500z" fill="#37b24a" />
            <path d="M10 7.500c1-.8 2-.5 2.300.3l1 2.400c.2.500-.3 1.200-1 2 1.500 2.600 3.200 3.800 5.200 4.600.8-1 1.200-1.600 1.800-1.300l2.600 1.300c.8.400 0 3-1.200 3.600-4.500 2.200-12.500-4.900-12-9.900.1-1.200.6-2.300 1.300-3z" fill="#fff" />
          </svg>
          <div className="absolute left-[20px] top-[14px] flex h-[21px] w-[21px] items-center justify-center rounded-full border border-[#8f8f8f] bg-[#2c2f33] text-[14px] leading-none tracking-[-0.5px]">
            21
          </div>
        </div>
      </TaskbarApp>
      <TaskbarApp className="w-[61px]" running="one">
        <svg className="h-[29px] w-[29px]" viewBox="0 0 29 29" fill="none" stroke="#101a14" strokeLinecap="round">
          <circle cx="14.500" cy="14.500" r="14.500" fill="#1fd760" stroke="none" />
          <path d="M6 9.800c6-1.800 12.500-1.200 17.500 1.700" strokeWidth="2.800" />
          <path d="M6.800 14.500c5.500-1.500 10.500-.9 15 1.600" strokeWidth="2.300" />
          <path d="M7.500 19c4.500-1.200 8.700-.7 12.300 1.400" strokeWidth="1.900" />
        </svg>
      </TaskbarApp>
      <TaskbarApp className="w-[61px]" running="many">
        <VmwareLogo className="h-[30px] w-[30px]" />
      </TaskbarApp>
      <TaskbarApp className="w-[61px]" running="one">
        <svg className="mr-1 h-[27px] w-7" viewBox="0 0 28 27">
          <path d="M24 3l3.500 19-4 4.500z" fill="#c39a55" />
          <path d="M9 1l16 1.500L21.500 26 0 23z" fill="#e9f2f4" />
          <path d="M9.500 3L24 4l-4.500 20L3 21z" fill="#7fb9cd" />
          <path d="M9.500 3L24 4l-1.500 6L3 19z" fill="#b8dce6" />
          <path d="M9 1.500h16" stroke="#8a8f91" strokeWidth="2" strokeDasharray="1.500 1" />
        </svg>
      </TaskbarApp>
      <TaskbarApp className="w-[60px] bg-[#47505b] [&>div:last-child]:w-[60px]" running="one">
        <svg className="h-[30px] w-[26px]" viewBox="0 0 26 30" fill="none">
          <path d="M10 11C4 10 2 6.500 4 4s8-2.500 13 0 8 9 6.500 13-6 3.500-8-1" stroke="#d63b08" strokeWidth="3.200" />
          <path d="M12 3l3.500-2v19l-3 1z" fill="#e4e6e7" />
          <path d="M10 12l10 6-2 3-7-4z" fill="#b5babd" />
          <path d="M6 21l8-1.500" stroke="#0f63b5" strokeWidth="2.600" />
          <circle cx="4.300" cy="22" r="2.900" stroke="#0f63b5" strokeWidth="2.400" />
          <path d="M13.500 19v4" stroke="#2a97e5" strokeWidth="2.600" />
          <circle cx="14.500" cy="25.800" r="2.800" stroke="#2a97e5" strokeWidth="2.400" />
        </svg>
      </TaskbarApp>

      <div className="ml-auto flex items-center">
        <div className="h-[25px] w-[25px] rounded-full bg-gradient-to-br from-[#f5bd2c] to-[#f0660f]" />
        <span className="ml-3 w-[59px] text-[17px] tracking-[-0.12px]">27°C</span>
        <svg className="h-[9px] w-4" viewBox="0 0 16 9" fill="none" stroke="#fff" strokeWidth="1.300">
          <path d="M.5 8.500L8 1l7.500 7.500" />
        </svg>
        <svg className="ml-3 h-[21px] w-5" viewBox="0 0 20 21" fill="none" stroke="#fff" strokeWidth="1.200">
          <path d="M.6 4L19.400.700v14.800M.6 4v14h10" />
          <path d="M6 9.500c1-2.500 5-3 6.500-.5V6.500M12.500 9H10M13 12c-1 2.500-5 3-6.500.5V15M6.500 12.500H9" />
          <circle cx="15.700" cy="16" r="4.500" fill="#ff9300" stroke="none" />
        </svg>
        <svg className="ml-[11px] h-[11px] w-[19px]" viewBox="0 0 19 11" fill="none" stroke="#fff">
          <path d="M.6.600h16v10H.6zM18 3v5" strokeWidth="1.200" />
          <path d="M3 3h4v5H3z" fill="#fff" stroke="none" />
        </svg>
        <svg className="ml-[10px] h-[17px] w-5" viewBox="0 0 20 17" fill="none" stroke="#fff" strokeWidth="1.200">
          <path d="M.6 6h2.500l4-4v13l-4-4H.6zM10 6c1.300 1.500 1.300 3.500 0 5M13 3.500c2.800 3 2.800 7 0 10M16 1c4.200 4.500 4.200 10.500 0 15" />
        </svg>
        <span className="ml-[14px] w-[28px] text-[15px] tracking-[-0.89px]">ENG</span>
        <div className="mb-px ml-[12px] flex w-[84px] flex-col items-center text-[15px] leading-[23px]">
          <span className="tracking-[-0.87px]">11:00</span>
          <span className="tracking-[-0.33px]">18-10-2022</span>
        </div>
        <div className="relative ml-[19px] w-[46px]">
          <svg className="h-[20px] w-5" viewBox="0 0 20 20" fill="none">
            <path d="M0 0h20v15.500h-8L7.500 20v-4.500H0z" fill="#fff" />
            <path d="M4 4.500h12M4 8h12M4 11.500h12" stroke="#1a2634" />
          </svg>
          <div className="absolute left-[9px] top-[9px] flex h-[21px] w-[21px] items-center justify-center rounded-full border border-[#8f8f8f] bg-[#2c3036] text-[14px] leading-none">
            1
          </div>
        </div>
        <div className="h-[50px] w-[6px] border-l border-[#66707b]" />
      </div>
    </div>
  );
}

export default function App() {
  return (
    <div className="h-[1077px] w-[1920px] overflow-hidden bg-black font-['Noto_Sans',sans-serif] leading-none">
      <TitleBar />
      <div className="border-x border-[#666666]">
        <MenuBar />
        <VmTabs />
        <KaliPanel />
        <BrowserTabs />
        <NavBar />
        <Bookmarks />
        <Report />
      </div>
      <StatusBar />
      <Taskbar />
    </div>
  );
}
